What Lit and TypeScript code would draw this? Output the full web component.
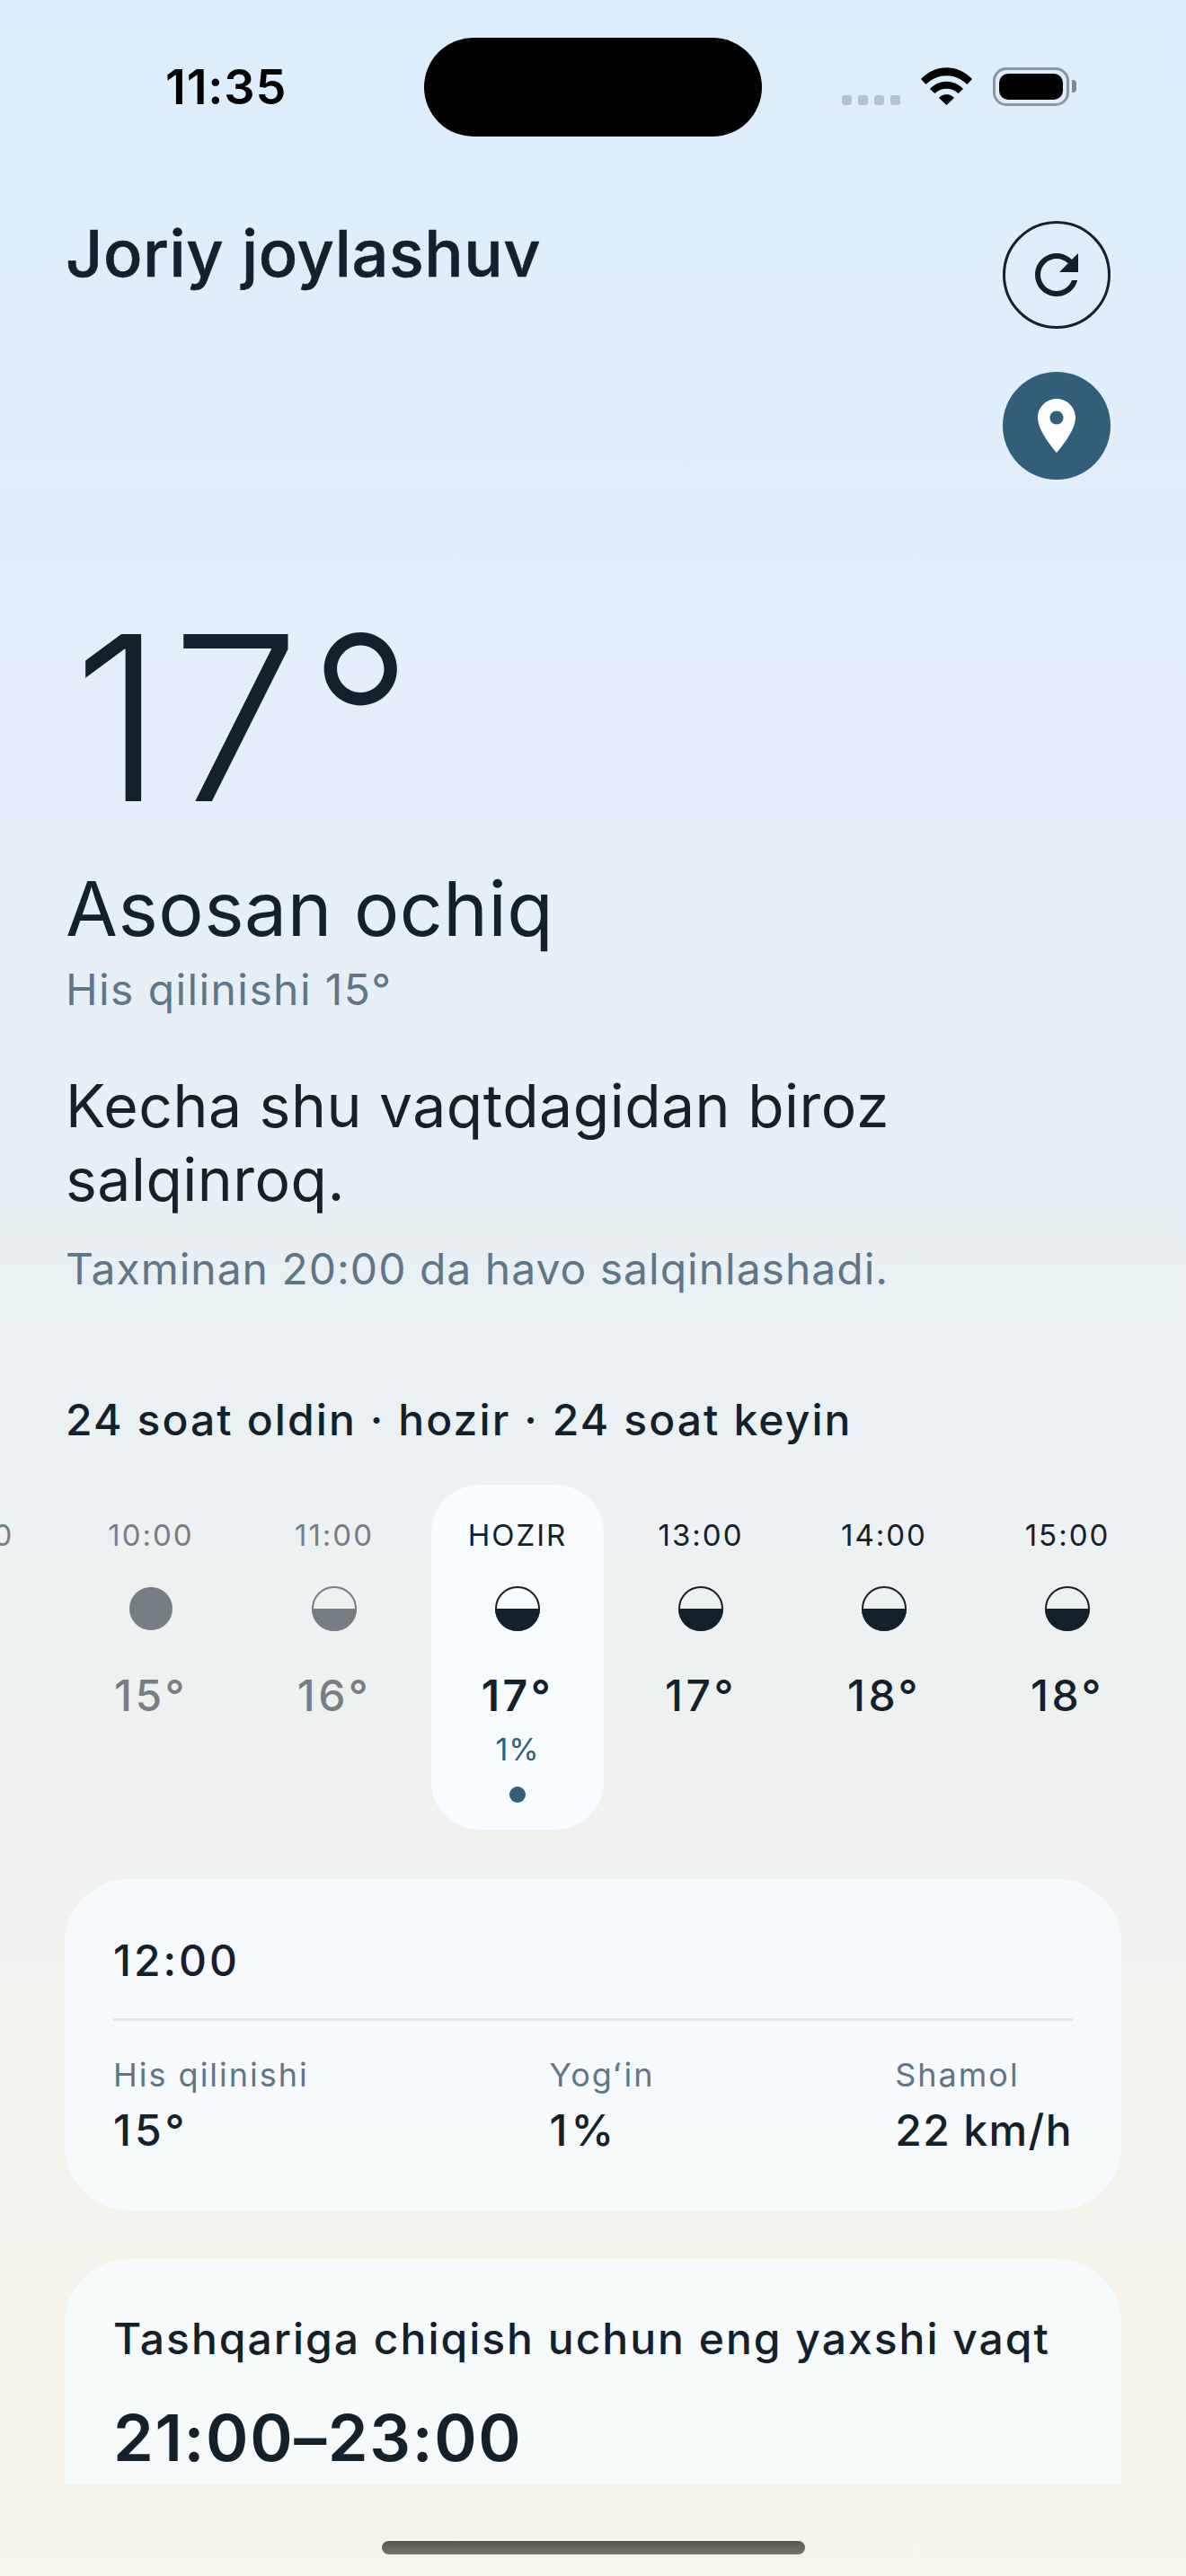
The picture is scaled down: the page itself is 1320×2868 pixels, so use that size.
import { LitElement, html, css } from "lit";
import { customElement } from "lit/decorators.js";

const hours = [
  { t: "09:00", d: "14°", full: true, past: true },
  { t: "10:00", d: "15°", full: true, past: true },
  { t: "11:00", d: "16°", past: true },
  { t: "HOZIR", d: "17°", now: true },
  { t: "13:00", d: "17°" },
  { t: "14:00", d: "18°" },
  { t: "15:00", d: "18°" },
  { t: "16:00", d: "18°" },
];

@customElement("app-root")
export class AppRoot extends LitElement {
  static styles = css`
    :host { display: block; width: 1320px; height: 2868px; overflow: hidden; font-family: Inter, "Noto Sans", sans-serif; color: #14212b;
      background: linear-gradient(180deg, #dcedff 0%, #f7f3e9 100%); }
    .screen { height: 2868px; display: flex; flex-direction: column; }
    .status { flex: none; height: 194px; box-sizing: border-box; padding: 42px 0 0 0; display: grid; grid-template-columns: 472px 376px 1fr; }
    .time { font-size: 54px; font-weight: 600; line-height: 110px; padding-left: 184px; color: #000; letter-spacing: .8px; }
    .island { height: 110px; background: #000; border-radius: 55px; }
    .sys { display: flex; align-items: flex-start; padding: 33px 0 0 89px; }
    .cell-dots { display: flex; gap: 7px; margin-top: 31px; margin-right: 23px; }
    .cell-dots i { width: 11px; height: 11px; border-radius: 3px; background: #b5c1cf; }
    .wifi { width: 57px; height: 42px; margin-right: 23px; }
    .bat { box-sizing: border-box; width: 85px; height: 43px; border: 3px solid #8b959f; border-radius: 15px; padding: 4px; }
    .bat i { display: block; height: 100%; background: #000; border-radius: 10px; }
    .cap { width: 5px; height: 14px; margin: 14px 0 0 3px; background: #7f8890; border-radius: 0 4px 4px 0; }
    .content { flex: none; height: 2572px; overflow: hidden; }
    .head { display: flex; justify-content: space-between; padding: 0 84px 0 73px; height: 455px; }
    .title { font-size: 72px; font-weight: 500; line-height: 90px; margin: 43px 0 0; letter-spacing: .6px; -webkit-text-stroke: .6px #14212b; }
    .btns { display: flex; flex-direction: column; gap: 48px; padding-top: 52px; }
    .btn { box-sizing: border-box; width: 120px; height: 120px; border-radius: 50%; display: flex; align-items: center; justify-content: center; }
    .btn svg { width: 72px; height: 72px; }
    .btn.out { border: 3px solid #14212b; color: #14212b; }
    .btn.fill { background: #335e7a; color: #fff; }
    .hero { padding: 0 73px; }
    .deg { font-size: 256px; font-weight: 300; line-height: 300px; margin: 0 0 0 8px; height: 313px; letter-spacing: 9px; }
    .cond { font-size: 84px; font-weight: 400; line-height: 100px; letter-spacing: .5px; }
    .feel { font-size: 48px; line-height: 60px; color: #5f7689; margin-top: 10px; letter-spacing: 1.4px; }
    .sum { font-size: 66px; line-height: 82px; margin-top: 58px; letter-spacing: .5px; }
    .sub { font-size: 48px; line-height: 60px; color: #5f7689; margin-top: 29px; letter-spacing: 1px; }
    .range { font-size: 48px; font-weight: 500; line-height: 60px; margin-top: 108px; letter-spacing: 2.1px; }
    .hours { display: flex; gap: 12px; margin: 42px 0 0 -132px; width: max-content; align-items: flex-start; }
    .h { width: 192px; height: 384px; box-sizing: border-box; padding-top: 36px; display: flex; flex-direction: column; align-items: center; border-radius: 54px; }
    .h.now { background: #f8fbff; }
    .h.past > * { opacity: .55; }
    .lbl { font-size: 33px; line-height: 40px; letter-spacing: 2px; }
    .ic { width: 50px; height: 50px; margin-top: 37px; display: block; }
    .tmp { font-size: 48px; line-height: 58px; font-weight: 500; margin-top: 43px; letter-spacing: 3.5px; }
    .now .tmp { font-weight: 600; }
    .pct { font-size: 34px; line-height: 40px; color: #335e7a; margin-top: 11px; letter-spacing: 1px; }
    .dot { width: 18px; height: 18px; border-radius: 50%; background: #335e7a; margin-top: 21px; }
    .card { margin: 0 72px; background: rgba(248,251,255,.8); border-radius: 72px; box-sizing: border-box; padding: 54px; }
    .c1 { margin-top: 55px; height: 369px; padding-top: 61px; }
    .c2 { margin-top: 54px; height: 400px; padding-top: 59px; }
    .ct { font-size: 48px; font-weight: 500; line-height: 60px; letter-spacing: 3px; }
    .c2 .ct { letter-spacing: 2px; }
    .div { height: 3px; background: #dfe4e8; margin-top: 34px; }
    .stats { display: flex; justify-content: space-between; margin-top: 36px; }
    .sl { font-size: 36px; line-height: 48px; color: #5f7689; letter-spacing: 2px; }
    .sv { font-size: 48px; line-height: 60px; font-weight: 500; letter-spacing: 1.4px; margin-top: 8px; }
    .sv.num { letter-spacing: 4px; }
    .c2 .big { font-size: 72px; font-weight: 600; line-height: 90px; margin-top: 35px; letter-spacing: 1.6px; }
    .footer { flex: none; height: 102px; display: flex; justify-content: center; padding-top: 63px; box-sizing: border-box; }
    .home { width: 471px; height: 15px; border-radius: 8px; background: linear-gradient(180deg, #55554f, #77766f); }
  `;

  private icon(h: any) {
    const c = "#14212b";
    if (h.full) return html`<svg class="ic" viewBox="0 0 50 50"><circle cx="25" cy="25" r="24" fill="${c}"/></svg>`;
    return html`<svg class="ic" viewBox="0 0 50 50"><circle cx="25" cy="25" r="24" fill="none" stroke="${c}" stroke-width="2"/><path d="M0 25a25 25 0 0 0 50 0z" fill="${c}"/></svg>`;
  }

  render() {
    return html`<div class="screen">
      <div class="status">
        <div class="time">11:35</div>
        <div class="island"></div>
        <div class="sys">
          <div class="cell-dots"><i></i><i></i><i></i><i></i></div>
          <svg class="wifi" viewBox="0 0 57 42"><path d="M0 13C16-4 41-4 57 13L51.500 19C38 6 19 6 5.500 19Z"/><path d="M10 24C20 13 37 13 47 24L41.700 29C34 22 23 22 15.300 29Z"/><path d="M20 34C25 28.500 32 28.500 37 34L28.500 42Z"/></svg>
          <div class="bat"><i></i></div><div class="cap"></div>
        </div>
      </div>
      <div class="content">
        <div class="head">
          <h1 class="title">Joriy joylashuv</h1>
          <div class="btns">
            <div class="btn out"><svg viewBox="0 0 24 24" fill="currentColor"><path d="M17.650 6.350C16.200 4.900 14.210 4 12 4c-4.420 0-7.990 3.580-7.990 8s3.570 8 7.990 8c3.730 0 6.840-2.550 7.730-6h-2.080c-.82 2.330-3.040 4-5.650 4-3.310 0-6-2.690-6-6s2.690-6 6-6c1.660 0 3.140.69 4.220 1.780L13 11h7V4l-2.350 2.350z"/></svg></div>
            <div class="btn fill"><svg viewBox="0 0 24 24" fill="currentColor"><path d="M12 2C8.130 2 5 5.130 5 9c0 5.250 7 13 7 13s7-7.750 7-13c0-3.870-3.130-7-7-7zm0 9.500c-1.380 0-2.500-1.120-2.500-2.500s1.120-2.500 2.500-2.500 2.500 1.120 2.500 2.500-1.120 2.500-2.500 2.500z"/></svg></div>
          </div>
        </div>
        <div class="hero">
          <div class="deg">17°</div>
          <div class="cond">Asosan ochiq</div>
          <div class="feel">His qilinishi 15°</div>
          <div class="sum">Kecha shu vaqtdagidan biroz<br />salqinroq.</div>
          <div class="sub">Taxminan 20:00 da havo salqinlashadi.</div>
          <div class="range">24 soat oldin · hozir · 24 soat keyin</div>
        </div>
        <div class="hours">
          ${hours.map((h) => html`<div class="h ${h.now ? "now" : ""} ${h.past ? "past" : ""}">
            <div class="lbl">${h.t}</div>
            ${this.icon(h)}
            <div class="tmp">${h.d}</div>
            ${h.now ? html`<div class="pct">1%</div><div class="dot"></div>` : ""}
          </div>`)}
        </div>
        <div class="card c1">
          <div class="ct">12:00</div>
          <div class="div"></div>
          <div class="stats">
            <div><div class="sl">His qilinishi</div><div class="sv num">15°</div></div>
            <div><div class="sl">Yogʻin</div><div class="sv num">1%</div></div>
            <div><div class="sl">Shamol</div><div class="sv">22 km/h</div></div>
          </div>
        </div>
        <div class="card c2">
          <div class="ct">Tashqariga chiqish uchun eng yaxshi vaqt</div>
          <div class="big">21:00–23:00</div>
        </div>
      </div>
      <div class="footer"><div class="home"></div></div>
    </div>`;
  }
}
